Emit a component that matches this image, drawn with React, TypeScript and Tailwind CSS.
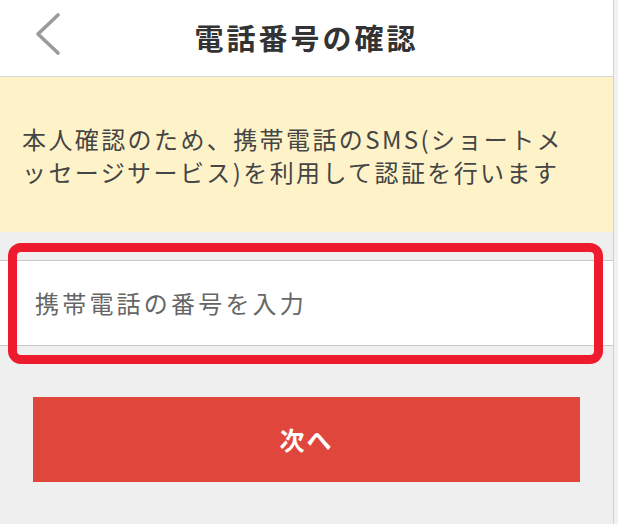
const font = { fontFamily: '"Noto Sans CJK JP", "Noto Sans", sans-serif' }

function BackChevron() {
  return (
    <svg width="30" height="44" viewBox="0 0 30 44" fill="none" aria-hidden>
      <polyline
        points="25,3 5,22 25,41"
        stroke="#9b9b9b"
        strokeWidth="3.6"
        strokeLinecap="round"
        strokeLinejoin="round"
      />
    </svg>
  )
}

function Header() {
  return (
    <div className="relative flex h-[77px] items-center justify-center border-b border-[#d9d7cf] bg-white">
      <button className="absolute left-[33px] top-[12px]" aria-label="戻る">
        <BackChevron />
      </button>
      <h1 className="text-[29px] font-bold tracking-[3px] text-[#333333]">電話番号の確認</h1>
    </div>
  )
}

export default function App() {
  return (
    <div className="h-[524px] w-[618px] overflow-hidden bg-[#f1f1f1]" style={font}>
      <div className="h-full w-[614px] border-r border-[#d2d2d2] bg-[#efefef]">
        <Header />

        {/* notice */}
        <div className="flex h-[155px] flex-col justify-center bg-[#fef3c8] px-[22px] text-[24px] leading-[33px] tracking-[2.4px] text-[#454545]">
          <span className="whitespace-nowrap">本人確認のため、携帯電話のSMS(ショートメ</span>
          <span className="whitespace-nowrap">ッセージサービス)を利用して認証を行います</span>
        </div>

        {/* phone input, highlighted */}
        <div className="relative pt-[28px] pb-[18px]">
          <div className="flex h-[86px] items-center border-y border-[#c8c8c8] bg-white pl-[35px]">
            <span className="text-[24px] tracking-[3.2px] text-[#666666]">携帯電話の番号を入力</span>
          </div>
          <div className="pointer-events-none absolute left-[8px] right-[10px] top-[11px] bottom-[0px] rounded-[13px] border-[9px] border-[#ee1a2d]" />
        </div>

        <div className="px-[33px] pt-[33px]">
          <button className="flex h-[85px] w-full items-center justify-center bg-[#e0463b] text-[25px] font-bold tracking-[2px] text-white">
            次へ
          </button>
        </div>
      </div>
    </div>
  )
}
